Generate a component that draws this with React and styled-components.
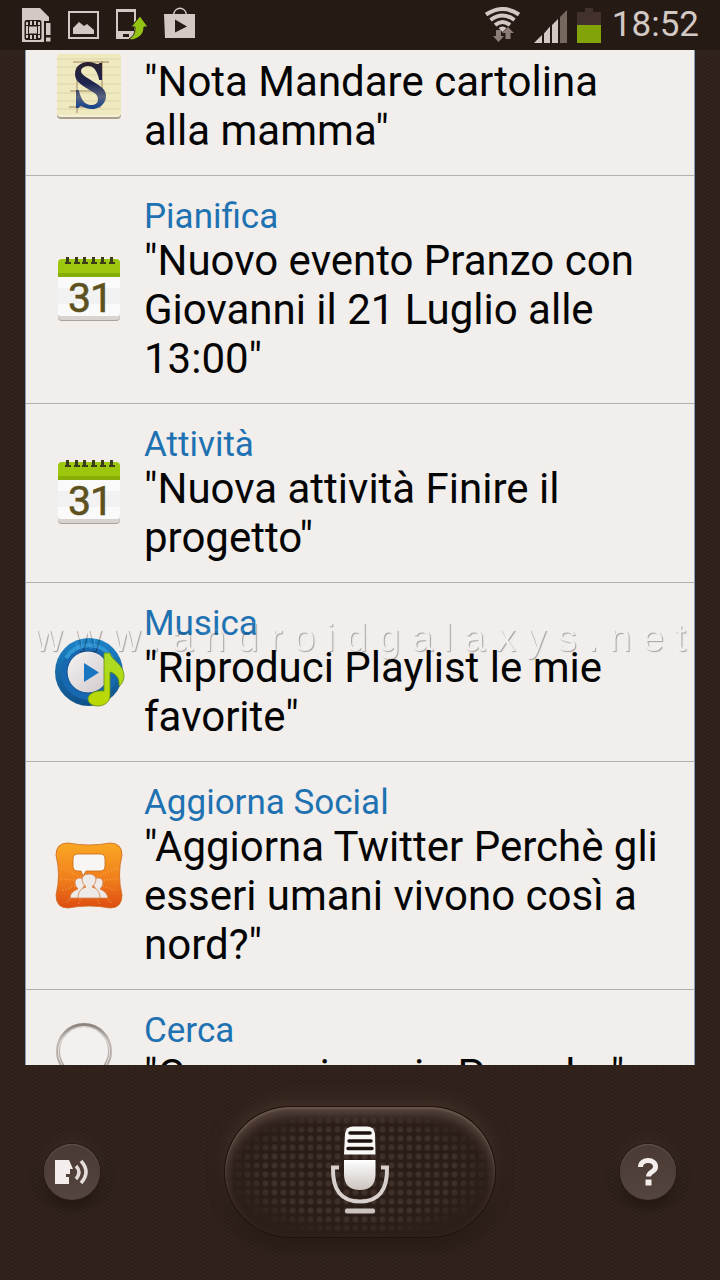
import { useLayoutEffect, useRef } from "react";
import styled, { createGlobalStyle } from "styled-components";

const colors = {
  bar: "#261a15",
  leather: "#34251e",
  leatherDark: "#291c16",
  panel: "#f1eeeb",
  panelEdge: "#7f9cba",
  divider: "#b3afac",
  title: "#1f72b2",
  text: "#050505",
  status: "#d3c9c4",
  statusDim: "#76675f",
};

const GlobalStyle = createGlobalStyle`
  * {
    box-sizing: border-box;
  }
  body {
    margin: 0;
    font-family: Roboto, "Noto Sans", sans-serif;
    background-color: ${colors.leather};
  }
`;

const Screen = styled.div`
  position: relative;
  height: 100vh;
  display: flex;
  flex-direction: column;
  background-color: ${colors.leather};
  background-image:
    radial-gradient(circle, ${colors.leatherDark}, transparent 2px),
    radial-gradient(circle, ${colors.leatherDark}, transparent 2px);
  background-size: 6px 4px;
  background-position: 0 0, 3px 2px;
`;

const StatusBar = styled.header`
  flex: none;
  height: 50px;
  padding: 0 21px 0 22px;
  display: flex;
  align-items: center;
  justify-content: space-between;
  background-color: ${colors.bar};
`;

const StatusGroup = styled.div`
  display: flex;
  align-items: center;
  gap: ${props => props.$gap}px;
  & svg {
    display: block;
  }
`;

const Clock = styled.time`
  font-size: 35px;
  line-height: 48px;
  color: ${colors.status};
`;

const List = styled.ul`
  flex: 1;
  min-height: 0;
  margin: 0 25px;
  padding: 0;
  list-style: none;
  overflow-y: auto;
  scrollbar-width: none;
  background-color: ${colors.panel};
  border: solid ${colors.panelEdge};
  border-width: 0 1px;
`;

const Row = styled.li`
  display: flex;
  align-items: center;
  gap: 22px;
  padding: 0 28px 0 30px;
  border-bottom: 1px solid ${colors.divider};
  & svg {
    display: block;
    flex: none;
  }
`;

const RowBody = styled.div`
  padding: 21px 0 20px;
`;

const RowTitle = styled.h2`
  margin: 0;
  font-size: 35px;
  font-weight: 400;
  line-height: 39px;
  color: ${colors.title};
`;

const RowText = styled.p`
  margin: 0;
  font-size: 42px;
  line-height: 49px;
  color: ${colors.text};
`;

const Watermark = styled.div`
  position: absolute;
  inset: 0;
  padding: 0 0 4px 11px;
  display: flex;
  align-items: center;
  justify-content: center;
  pointer-events: none;
  mix-blend-mode: hard-light;
  font-family: "Liberation Sans", Arial, sans-serif;
  font-size: 39px;
  letter-spacing: 11px;
  color: #808080;
  text-shadow: 1px 1px 1px #585858, -1px -1px 1px #969696;
`;

const Footer = styled.footer`
  flex: none;
  height: 215px;
  padding: 0 44px 2px;
  display: flex;
  align-items: center;
  justify-content: space-between;
`;

const RoundButton = styled.button`
  width: 56px;
  height: 56px;
  padding: 0;
  display: flex;
  align-items: center;
  justify-content: center;
  border: 0;
  border-radius: 50%;
  background: linear-gradient(#4a3a33, #54453e);
  box-shadow:
    inset 0 1px 1px #66564e,
    0 0 0 1px #291b16,
    0 -4px 14px #4a3a3188,
    0 5px 12px #150c08aa;
`;

const MicButton = styled.button`
  width: 270px;
  height: 130px;
  padding: 0;
  display: flex;
  align-items: center;
  justify-content: center;
  border: 0;
  border-radius: 65px;
  background:
    radial-gradient(ellipse at center, transparent 50%, #2c1e18 72%),
    radial-gradient(circle at center, #3f302a 2px, transparent 4px) 0 0 / 9px 9px,
    #2a1c16;
  box-shadow:
    inset 0 2px 2px #6a564d,
    inset 0 8px 12px #594840,
    0 0 0 1px #20130e,
    0 -6px 18px #50403599,
    0 6px 16px #1c110caa;
`;

function SimIcon() {
  return (
    <svg width="29" height="36" viewBox="22 7 29 36" aria-hidden="true">
      <path d="M22 8h18l9 9v4h-5v21H22z" fill={colors.status} />
      <rect x="24.5" y="20" width="17" height="20" rx="2" fill={colors.bar} />
      <path d="M26 22h2v3h-2zM30 21h2v4h-2zM34 21h2v4h-2zM38 22h2v3h-2zM26 35h2v3h-2zM30 35h2v4h-2zM34 35h2v4h-2zM38 35h2v3h-2z" fill={colors.status} />
      <path d="M26 26h14v8H26z" fill={colors.status} />
      <rect x="28.5" y="26" width="9" height="8" fill={colors.status} stroke={colors.bar} />
      <path d="M44 21h7v21h-7z" fill={colors.bar} />
      <path d="M46 23h4.500v12H46zM46 37.500h4.500v4H46z" fill={colors.status} />
    </svg>
  );
}

function PictureIcon() {
  return (
    <svg width="31" height="36" viewBox="68 7 31 36" aria-hidden="true">
      <rect x="69" y="12" width="29" height="26" fill="none" stroke={colors.status} strokeWidth="2" />
      <path d="M73 34v-6l6-6 5 4 3-2 7 6v4z" fill={colors.status} />
    </svg>
  );
}

function PhoneUpdateIcon() {
  return (
    <svg width="31" height="36" viewBox="116 7 31 36" aria-hidden="true">
      <path d="M116 9h20v30h-20z" fill={colors.status} />
      <path d="M118 12h16v19h-16z" fill={colors.bar} />
      <path d="M123 34h6v3h-6z" fill={colors.bar} />
      <path d="M131 40c7-1 13-5 13-13h4l-8-11-9 11h4c0 6-1 9-6 12z" fill="#93c313" stroke={colors.bar} strokeWidth="1" />
    </svg>
  );
}

function PlayStoreIcon() {
  return (
    <svg width="31" height="36" viewBox="164 7 31 36" aria-hidden="true">
      <path d="M173.500 15c1-9 12-9 13 0" fill="none" stroke={colors.status} strokeWidth="1.500" />
      <path d="M164 14h31v24h-30z" fill={colors.status} />
      <path d="M175 19.500v13l12-6z" fill={colors.bar} />
    </svg>
  );
}

function WifiIcon() {
  return (
    <svg width="39" height="36" viewBox="484 7 39 36" aria-hidden="true">
      <g fill="none" stroke={colors.status} strokeWidth="4">
        <path d="M485 14.500q17-11 33 0" />
        <path d="M489.500 20q12-9 24 0" />
        <path d="M494 25q7.500-6 15 0" />
      </g>
      <path d="M497.500 28q4-3 8 0l-4 4z" fill={colors.status} />
      <path d="M495 30h5v6h3l-5.500 6-5.500-6h3z" fill="#8b7d76" />
      <path d="M504.500 39v-6H501l6-6 6 6h-3.500v6z" fill="#8b7d76" />
    </svg>
  );
}

function SignalIcon() {
  return (
    <svg width="33" height="36" viewBox="533 7 33 36" aria-hidden="true">
      <path d="M533 43l8-8v8zM543 33.500l6-7V43h-6zM551 25l6-6v24h-6z" fill={colors.status} />
      <path d="M559 17l7-7v33h-7z" fill={colors.statusDim} />
    </svg>
  );
}

function BatteryIcon() {
  return (
    <svg width="25" height="36" viewBox="576 7 25 36" aria-hidden="true">
      <path d="M576 12h8V8h8v4h8v14h-24z" fill="#42322b" />
      <path d="M576 25h24v18h-24z" fill="#83a30a" />
    </svg>
  );
}

function MemoIcon() {
  return (
    <svg width="66" height="66" viewBox="0 0 66 66" aria-hidden="true">
      <defs>
        <linearGradient id="memoInk" x1="0" y1="0" x2="0" y2="1">
          <stop offset="0" stopColor="#2b2230" />
          <stop offset="0.450" stopColor="#1c2450" />
          <stop offset="0.750" stopColor="#5a6480" />
          <stop offset="1" stopColor="#12438c" />
        </linearGradient>
      </defs>
      <rect x="1" y="4" width="64" height="62" rx="4" fill="#a9a08a" />
      <rect x="1" y="3" width="64" height="61" rx="4" fill="#f4efd8" />
      <rect x="1" y="1" width="64" height="61" rx="3" fill="#efe9bf" />
      <path d="M1 6h64M1 14h64M1 22h64M1 31h64M1 40h64M1 48h64M1 56h64" stroke="#ddd5a5" />
      <path d="M17 9h36M14 38h32M13 54h32M21 14v46M46 8v42" stroke="#8d6b47" strokeWidth="0.800" />
      <path
        d="M45 11v15h-1C42 17 38 12 32 12c-5 0-8 3-8 6 0 5 6 7 12 11 8 5 13 8 13 14 0 7-6 12-14 12-5 0-8-3-10-3-2 0-2 1-3 2h-1V38h1c2 9 6 15 13 15 5 0 8-3 8-7 0-5-4-7-11-11-8-5-12-8-12-14 0-7 6-11 12-11 5 0 8 2 10 2 1 0 2-1 2-1z"
        fill="url(#memoInk)"
        stroke="url(#memoInk)"
        strokeWidth="2"
      />
    </svg>
  );
}

function CalendarIcon() {
  return (
    <svg width="66" height="66" viewBox="0 2 66 66" overflow="visible" aria-hidden="true">
      <rect x="2" y="6" width="62" height="60" rx="4" fill="#aaa19c" />
      <rect x="2" y="5" width="62" height="60" rx="4" fill="#d9d3cf" />
      <path d="M2 20h62v38q0 3-3 3H5q-3 0-3-3z" fill="#fbfafa" />
      <path d="M2 33h62v16H2z" fill="#f3f2f2" />
      <path d="M2 22V8q0-4 4-4h54q4 0 4 4v14z" fill="#9cc70c" />
      <path d="M2 22v-4h62v4z" fill="#87ad08" />
      <path d="M10 2h3v5h2v2H9V7h1zM19 2h3v5h2v2h-6V7h1zM27 2h3v5h2v2h-6V7h1zM36 2h3v5h2v2h-6V7h1zM45 2h3v5h2v2h-6V7h1zM54 2h3v5h2v2h-6V7h1z" fill="#3a3d18" />
      <text x="12 34" y="57" fontFamily="Roboto, sans-serif" fontSize="41" fill="#5d5120" stroke="#5d5120" strokeWidth="0.600">
        31
      </text>
    </svg>
  );
}

function MusicIcon() {
  return (
    <svg width="66" height="66" viewBox="0 0 66 66" overflow="visible" aria-hidden="true">
      <defs>
        <linearGradient id="musicRing" x1="0" y1="0" x2="0" y2="1">
          <stop offset="0" stopColor="#1d84c8" />
          <stop offset="1" stopColor="#105088" />
        </linearGradient>
        <linearGradient id="musicNote" x1="0" y1="0" x2="0" y2="1">
          <stop offset="0" stopColor="#a9dc2a" />
          <stop offset="1" stopColor="#bcd800" />
        </linearGradient>
        <linearGradient id="musicDisc" x1="0" y1="0" x2="1" y2="1">
          <stop offset="0" stopColor="#f6f3f3" />
          <stop offset="1" stopColor="#cfc8ca" />
        </linearGradient>
      </defs>
      <circle cx="33" cy="33" r="34" fill="url(#musicRing)" />
      <circle cx="33" cy="33" r="28" fill="#1768b0" />
      <path d="M10 19A27 27 0 0 1 56 19" fill="none" stroke="#2f96d6" strokeWidth="4" />
      <circle cx="32" cy="33" r="21" fill="url(#musicDisc)" stroke="#0e4f8e" />
      <path d="M28 24v19L43 33.500z" fill="#1a75c0" />
      <path
        d="M48 14h6c1 7 14 11 14 23 0 5-3 9-5 10 1-8-4-13-9-14v24c0 6-6 10-12 10s-10-3-10-7c0-5 7-9 16-8z"
        fill="url(#musicNote)"
        stroke="#5f8d10"
        strokeWidth="0.800"
      />
    </svg>
  );
}

function SocialIcon() {
  return (
    <svg width="66" height="66" viewBox="0 0 66 66" overflow="visible" aria-hidden="true">
      <defs>
        <linearGradient id="socialBack" x1="0" y1="0" x2="0" y2="1">
          <stop offset="0" stopColor="#f9a823" />
          <stop offset="0.550" stopColor="#f07f1c" />
          <stop offset="1" stopColor="#dd4c10" />
        </linearGradient>
      </defs>
      <path
        d="M12 0q21 4 42 0 12 0 12 12-5 20 0 40 0 13-12 13-21-4-42 0Q0 65 0 52q5-20 0-40Q0 0 12 0z"
        fill="url(#socialBack)"
        stroke="#cf6a1f"
        strokeWidth="0.800"
      />
      <path d="M33 38L5 25M33 38L4 36M33 38L5 48M33 38L10 60M33 38l28-13M33 38l29-2M33 38l28 10M33 38l23 22M33 38L22 62M33 38l11 24" stroke="#ffb45c" strokeWidth="1.500" strokeDasharray="1 2" opacity="0.600" />
      <path d="M22 11h22q5 0 5 5v7q0 5-5 5H30l-3 5-2-5h-3q-5 0-5-5v-7q0-5 5-5z" fill="#f8f5f3" stroke="#c86a18" strokeWidth="0.800" />
      <g fill="#eeeae8" stroke="#d4824a" strokeWidth="0.800">
        <path d="M14 55q0-6 8-9-3-3-3-6 0-5 5-5t5 5q0 3-3 6 6 2 8 9z" />
        <path d="M34 55q0-7 6-9-3-3-3-6 0-5 5-5t5 5q0 3-3 6 7 3 8 9z" />
        <path d="M22 55q0-9 8-11-4-4-4-7 0-6 7-6t7 6q0 3-4 7 8 2 8 11z" />
      </g>
    </svg>
  );
}

function SearchIcon() {
  return (
    <svg width="66" height="66" viewBox="0 0 66 66" aria-hidden="true">
      <defs>
        <linearGradient id="lensRim" x1="0" y1="0" x2="0" y2="1">
          <stop offset="0" stopColor="#8e8580" />
          <stop offset="0.300" stopColor="#c1bab6" />
          <stop offset="1" stopColor="#a39b97" />
        </linearGradient>
      </defs>
      <path d="M48 48l13 13" stroke="#a39b97" strokeWidth="7" strokeLinecap="round" />
      <circle cx="28" cy="29" r="26" fill="#f3f1ef" stroke="url(#lensRim)" strokeWidth="4" />
      <circle cx="28" cy="30" r="25.500" fill="none" stroke="#e3dfdc" strokeWidth="1" />
    </svg>
  );
}

function SpeakIcon() {
  return (
    <svg width="36" height="28" viewBox="0 0 36 28" aria-hidden="true">
      <path d="M1 2h14l4 9h-3v5h-4v3h3v7H1z" fill="#f3eeeb" />
      <path d="M22 8q6 6 0 13M27 3q10 11 0 22" fill="none" stroke="#e4dcd8" strokeWidth="3.500" />
    </svg>
  );
}

function QuestionIcon() {
  return (
    <svg width="24" height="32" viewBox="0 0 24 32" aria-hidden="true">
      <path d="M4.500 11c0-9 15.500-8.500 15 0 0 5-7 4.500-7 9.500" fill="none" stroke="#f3eeeb" strokeWidth="5" />
      <path d="M9.500 23.500h6v6h-6z" fill="#f3eeeb" />
    </svg>
  );
}

function MicIcon() {
  return (
    <svg width="60" height="94" viewBox="330 1125 60 94" aria-hidden="true">
      <defs>
        <linearGradient id="micFill" x1="0" y1="0" x2="0" y2="1">
          <stop offset="0" stopColor="#ffffff" />
          <stop offset="1" stopColor="#cbc3be" />
        </linearGradient>
      </defs>
      <path d="M344 1154.500l1-21q1-7 8-7h14q7 0 8 7l.500 21z" fill="#faf8f7" />
      <path d="M350 1133h20M349 1141h22M348 1148.500h24" stroke="#1d120e" strokeWidth="3.500" strokeLinecap="round" />
      <path d="M344 1160h31.500v14q0 16-15.700 16T344 1174z" fill="url(#micFill)" />
      <path d="M339 1167.500h-6q-1 34 27 34t27-34h-6" fill="none" stroke="#d8d0cc" strokeWidth="4" />
      <rect x="345" y="1208.500" width="30" height="5" rx="2" fill="#cbc3be" />
    </svg>
  );
}

const commands = [
  { title: "Memo", text: "Nota Mandare cartolina alla mamma", Icon: MemoIcon },
  { title: "Pianifica", text: "Nuovo evento Pranzo con Giovanni il 21 Luglio alle 13:00", Icon: CalendarIcon },
  { title: "Attività", text: "Nuova attività Finire il progetto", Icon: CalendarIcon },
  { title: "Musica", text: "Riproduci Playlist le mie favorite", Icon: MusicIcon },
  { title: "Aggiorna Social", text: "Aggiorna Twitter Perchè gli esseri umani vivono così a nord?", Icon: SocialIcon },
  { title: "Cerca", text: "Concessionaria Porsche", Icon: SearchIcon },
];

// the list opens with the first command already scrolled under the status bar
const START_SCROLL = 53;

function App() {
  const listRef = useRef(null);
  useLayoutEffect(() => {
    listRef.current.scrollTop = START_SCROLL;
  }, []);
  return (
    <>
      <GlobalStyle />
      <Screen>
        <StatusBar>
          <StatusGroup $gap={17}>
            <SimIcon />
            <PictureIcon />
            <PhoneUpdateIcon />
            <PlayStoreIcon />
          </StatusGroup>
          <StatusGroup $gap={10}>
            <WifiIcon />
            <SignalIcon />
            <BatteryIcon />
            <Clock>18:52</Clock>
          </StatusGroup>
        </StatusBar>
        <List ref={listRef}>
          {commands.map(({ title, text, Icon }) => (
            <Row key={title}>
              <Icon />
              <RowBody>
                <RowTitle>{title}</RowTitle>
                <RowText>"{text}"</RowText>
              </RowBody>
            </Row>
          ))}
        </List>
        <Footer>
          <RoundButton type="button" aria-label="Leggi ad alta voce">
            <SpeakIcon />
          </RoundButton>
          <MicButton type="button" aria-label="Parla">
            <MicIcon />
          </MicButton>
          <RoundButton type="button" aria-label="Aiuto">
            <QuestionIcon />
          </RoundButton>
        </Footer>
        <Watermark>www.androidgalaxys.net</Watermark>
      </Screen>
    </>
  );
}

export default App;
